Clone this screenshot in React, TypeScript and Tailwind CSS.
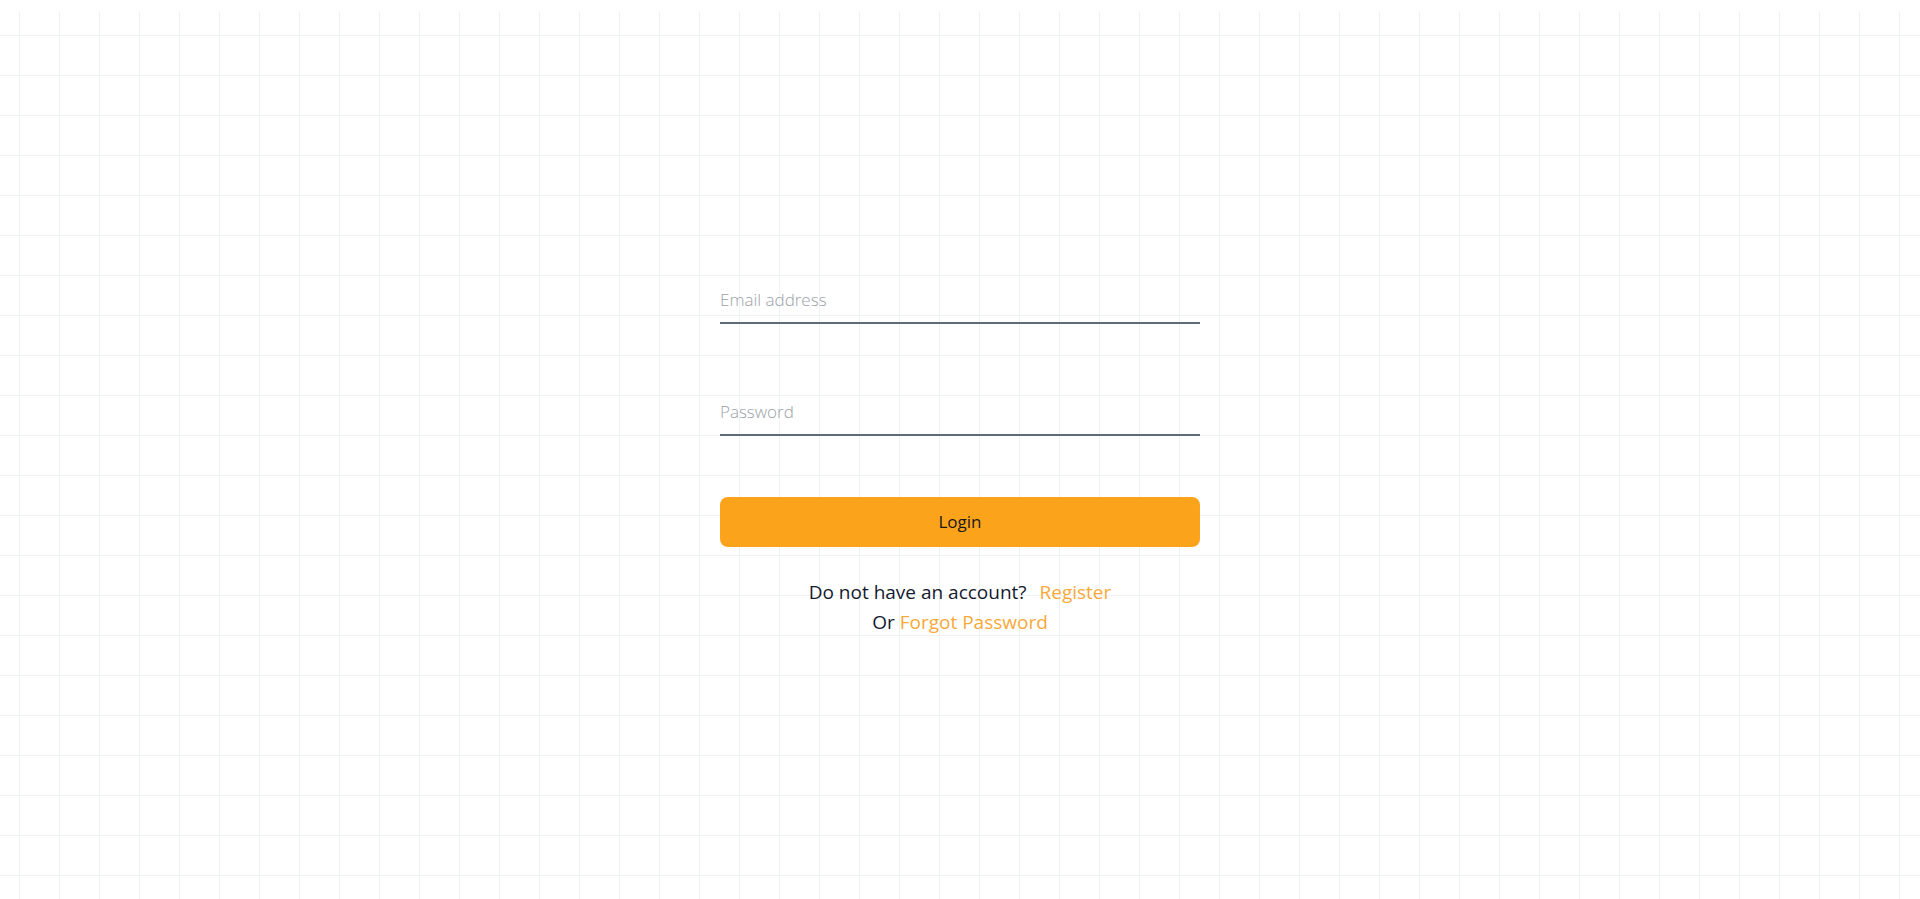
import { useState } from "react";

export default function App() {
  const [email, setEmail] = useState("");
  const [password, setPassword] = useState("");

  return (
    <div className="min-h-screen bg-white pt-[12px] font-['Open_Sans',sans-serif]">
      <div className="h-[887px] bg-[linear-gradient(to_right,#eef2f3_1px,transparent_1px),linear-gradient(to_bottom,#eef2f3_1px,transparent_1px)] bg-[size:40px_40px] bg-[position:19px_23px] flex justify-center">
        <form
          className="w-[480px] pt-[264px] flex flex-col"
          onSubmit={(e) => e.preventDefault()}
        >
          <input
            type="email"
            value={email}
            onChange={(e) => setEmail(e.target.value)}
            placeholder="Email address"
            className="h-[48px] w-full bg-transparent border-b-2 border-[#5e6b78] text-[17px] font-light text-[#1f2937] placeholder:text-[#9aa1a9] outline-none"
          />
          <input
            type="password"
            value={password}
            onChange={(e) => setPassword(e.target.value)}
            placeholder="Password"
            className="mt-[64px] h-[48px] w-full bg-transparent border-b-2 border-[#5e6b78] text-[17px] font-light text-[#1f2937] placeholder:text-[#9aa1a9] outline-none"
          />
          <button
            type="submit"
            className="mt-[61px] h-[50px] w-full rounded-lg bg-[#fca31c] text-[17px] font-medium text-[#1a1a1a]"
          >
            Login
          </button>
          <div className="mt-[30px] flex flex-col items-center text-[19px] leading-[30px] text-[#141a2e]">
            <p>
              Do not have an account?{" "}
              <a href="#" className="ml-2 text-[#f8a93a]">
                Register
              </a>
            </p>
            <p>
              Or{" "}
              <a href="#" className="text-[#f8a93a]">
                Forgot Password
              </a>
            </p>
          </div>
        </form>
      </div>
    </div>
  );
}
